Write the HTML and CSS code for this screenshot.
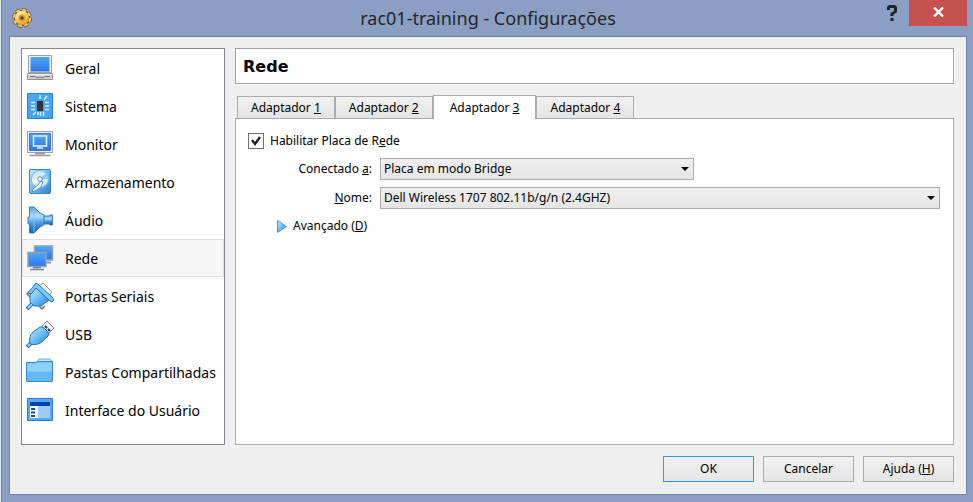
FILE: index.html
```html
<!DOCTYPE html>
<html lang="pt-BR">
    <head>
        <meta charset="UTF-8">
        <meta name="viewport" content="width=device-width, initial-scale=1.0">
        <title>rac01-training - Configurações</title>
        <link rel="stylesheet" href="styles.css">
    </head>
    <body>
        <header class="titlebar">
            <svg class="gear" viewBox="0 0 20 20">
                <defs>
                    <radialGradient id="gold" cx=".4" cy=".3" r=".75">
                        <stop offset="0" stop-color="#fff6c4"/>
                        <stop offset=".5" stop-color="#fbd468"/>
                        <stop offset="1" stop-color="#d08a25"/>
                    </radialGradient>
                </defs>
                <circle cx="10" cy="10" r="8.3" fill="#6b4a22"/>
                <circle cx="10" cy="10" r="8.4" fill="none" stroke="#6b4a22" stroke-width="3" stroke-dasharray="4.2 2.4"/>
                <circle cx="10" cy="10" r="8" fill="none" stroke="#f6c75c" stroke-width="2.4" stroke-dasharray="3.8 2.5"/>
                <circle cx="10" cy="10" r="7.2" fill="url(#gold)"/>
                <circle cx="10" cy="10" r="3.8" fill="#dda040"/>
                <circle cx="10" cy="10" r="1.8" fill="#5f3f15"/>
            </svg>
            <h1>rac01-training - Configurações</h1>
            <button class="help" aria-label="Ajuda">
                <svg width="10" height="16" viewBox="0 0 10 16"><path d="M0 5V2l2-2h6l2 2v5L6.5 9.5V11h-3V8L7 6V3H3v2zM3.5 13h3v3h-3z" fill="#222"/></svg>
            </button>
            <button class="close" aria-label="Fechar">
                <svg width="11" height="10" viewBox="0 0 11 10"><path d="M1 .5l9 9M10 .5l-9 9" stroke="#fff" stroke-width="2.4"/></svg>
            </button>
        </header>

        <main class="dialog">
            <div class="content">
                <nav class="sidebar">
                    <a href="#geral">
                        <svg viewBox="0 0 28 28">
                            <defs>
                                <linearGradient id="blue" x1="0" y1="0" x2="0" y2="1">
                                    <stop offset="0" stop-color="#4fa9fa"/>
                                    <stop offset="1" stop-color="#2f74e6"/>
                                </linearGradient>
                                <linearGradient id="sky" x1="0" y1="0" x2="1" y2="1">
                                    <stop offset="0" stop-color="#c8ecff"/>
                                    <stop offset=".5" stop-color="#6dbcf7"/>
                                    <stop offset="1" stop-color="#2b7bd0"/>
                                </linearGradient>
                                <linearGradient id="cone" x1="0" y1="0" x2="0" y2="1">
                                    <stop offset="0" stop-color="#4f9ce2"/>
                                    <stop offset=".35" stop-color="#b4defa"/>
                                    <stop offset=".6" stop-color="#4f9fe6"/>
                                    <stop offset="1" stop-color="#1b579f"/>
                                </linearGradient>
                            </defs>
                            <path d="M2.5 1.5h23v17h-23z" fill="#f2f2f2" stroke="#a0a0a0"/>
                            <path d="M4.5 3h19v14.5h-19z" fill="url(#blue)"/>
                            <path d="M1.5 19.5h25v6h-25z" fill="#cfcfcf" stroke="#909090"/>
                            <path d="M2 20.5h24" stroke="#f7f7f7"/>
                            <path d="M4 22.5h5l1 1h8l1-1h5" fill="none" stroke="#777"/>
                        </svg>
                        Geral
                    </a>
                    <a href="#sistema">
                        <svg viewBox="0 0 28 28">
                            <path d="M1.5 1.5h25v25h-25z" fill="#48a5f6" stroke="#2f83d6"/>
                            <path d="M11 9h6v10h-6z" fill="#333"/>
                            <path d="M14 3v4M18 8l3-4M5 10.5h4M5 14h4M5 17.5h4M19 10.5h4M19 14h4M19 17.5h4M10 20l-3 3M12 20v3M14.5 20v4M17.5 20v4" stroke="#d9f1ff" stroke-width="1.5"/>
                        </svg>
                        Sistema
                    </a>
                    <a href="#monitor">
                        <svg viewBox="0 0 28 28">
                            <path d="M1.5 1.5h25v21h-25z" fill="#f0f0f0" stroke="#a0a0a0"/>
                            <path d="M3.5 3.5h21v17h-21z" fill="url(#blue)" stroke="#3778d0"/>
                            <path d="M7.5 6h13v10h-13zM11 18h6" fill="none" stroke="#e4f5ff" stroke-width="1.5"/>
                            <path d="M9 23.5h10M3.5 25.5h21" stroke="#909090" stroke-width="1.5"/>
                        </svg>
                        Monitor
                    </a>
                    <a href="#armazenamento">
                        <svg viewBox="0 0 28 28">
                            <rect x="3.5" y="1.5" width="21" height="24" rx="1.5" fill="url(#sky)" stroke="#3a86cb"/>
                            <circle cx="14" cy="11" r="8.5" fill="#d2edfc" stroke="#79b5df"/>
                            <path d="M14 11l6-6a8 8 0 012 6z" fill="#8ec9ee"/>
                            <path d="M14 11l-6 6a8 8 0 01-2-6z" fill="#fff"/>
                            <circle cx="14" cy="11" r="2.3" fill="#fff" stroke="#5792bd"/>
                            <path d="M6 24l1-3 5-4 3-4 2 1-2 5-6 4z" fill="#f6fcff" stroke="#477fae" stroke-width=".8"/>
                        </svg>
                        Armazenamento
                    </a>
                    <a href="#audio">
                        <svg viewBox="0 0 28 28">
                            <path d="M16 10h7l1-1h2.5v10H24l-1-1h-7z" fill="url(#cone)" stroke="#3a7dc2"/>
                            <path d="M3.5 1H8l6 6 4 2v10l-4 2-6 6H3.500v-9H2v-7h1.5z" fill="url(#cone)" stroke="#3a7dc2"/>
                            <path d="M8 2v24" stroke="#8dc4ee"/>
                        </svg>
                        Áudio
                    </a>
                    <a href="#rede" class="selected" aria-current="page">
                        <svg viewBox="0 0 28 28">
                            <path d="M8.5 2h18v14h-18z" fill="url(#blue)" stroke="#8fa3b8" stroke-width="1.5"/>
                            <path d="M18 18.5h7" stroke="#8395a8" stroke-width="2"/>
                            <path d="M2 8.5h18v14H2z" fill="url(#blue)" stroke="#8fa3b8" stroke-width="1.5"/>
                            <path d="M7 23.5h8M4 25.5h14" stroke="#71869c" stroke-width="1.5"/>
                        </svg>
                        Rede
                    </a>
                    <a href="#portas-seriais">
                        <svg viewBox="0 0 28 28">
                            <path d="M13 4l4-3 9 9-3 4z" fill="#f4f4f4" stroke="#999"/>
                            <path d="M4 9l-3 3 3 3M13 24l3 3 3-3" fill="#ddd" stroke="#777" stroke-width="1.5"/>
                            <path d="M1 27l6-6" stroke="#2f7fc5" stroke-width="4"/>
                            <path d="M2 26l5-5" stroke="#8fd2fb" stroke-width="2"/>
                            <path d="M10 6l-6 7v7l4 4h7l8-6z" fill="url(#sky)" stroke="#2676bd"/>
                            <path d="M10 1l3 2 13 12 2 3-2 2-3-2L10 6 5 12l-3-1z" fill="#7cc8f8" stroke="#2c73b3"/>
                        </svg>
                        Portas Seriais
                    </a>
                    <a href="#usb">
                        <svg viewBox="0 0 28 28">
                            <path d="M15 7l6-6 7 7-6 6z" fill="#f0f0f0" stroke="#888"/>
                            <path d="M19 6l2 2M22 9l2 2" stroke="#333" stroke-width="2"/>
                            <path d="M5 23l-4 4" stroke="#2f81c9" stroke-width="4"/>
                            <path d="M5 23l-3 3" stroke="#8fd2fb" stroke-width="2"/>
                            <path d="M14 7q2-1 4 1l4 4q2 2 0 4l-5 5q-5 5-13 3-2-7 3-12z" fill="url(#sky)" stroke="#2873b9"/>
                        </svg>
                        USB
                    </a>
                    <a href="#pastas">
                        <svg viewBox="0 0 28 28">
                            <path d="M11 4l2-3h11l2 3v4H11z" fill="#c4ebff" stroke="#71a9ce"/>
                            <path d="M.5 4.5h9l2-1h15v20H.5z" fill="#63b9f5" stroke="#3989cb"/>
                            <path d="M1 5.5h9l2-1h14v9H1z" fill="#8bd2fd"/>
                        </svg>
                        Pastas Compartilhadas
                    </a>
                    <a href="#interface">
                        <svg viewBox="0 0 28 28">
                            <path d="M1.5 2.5h25v22h-25z" fill="#54aaf5" stroke="#3478cc"/>
                            <path d="M4 6h20v4H4z" fill="#0645a4"/>
                            <path d="M4 10h20v12H4z" fill="#f4faff"/>
                            <path d="M12 10h12v12H12z" fill="#9fcbff"/>
                            <path d="M5 12h4v2H5zM5 15.5h4v2H5zM5 19h4v2H5z" fill="#16499d"/>
                        </svg>
                        Interface do Usuário
                    </a>
                </nav>

                <section class="page">
                    <h2>Rede</h2>
                    <div class="tabs" role="tablist">
                        <button role="tab">Adaptador <u>1</u></button>
                        <button role="tab">Adaptador <u>2</u></button>
                        <button role="tab" class="active" aria-selected="true">Adaptador <u>3</u></button>
                        <button role="tab">Adaptador <u>4</u></button>
                    </div>
                    <form class="panel">
                        <div class="enable">
                            <input type="checkbox" id="enable" checked>
                            <label for="enable">Habilitar Placa de R<u>e</u>de</label>
                        </div>
                        <div class="fields">
                            <label for="attached">Conectado <u>a</u>:</label>
                            <select id="attached" class="short">
                                <option>Placa em modo Bridge</option>
                            </select>
                            <label for="name"><u>N</u>ome:</label>
                            <select id="name">
                                <option>Dell Wireless 1707 802.11b/g/n (2.4GHZ)</option>
                            </select>
                        </div>
                        <button type="button" class="advanced">
                            <svg width="10" height="13" viewBox="0 0 10 13"><path d="M.5 .5l9 6-9 6z" fill="url(#sky)" stroke="#4a98e0"/></svg>
                            <span>Avançado (<u>D</u>)</span>
                        </button>
                    </form>
                </section>
            </div>

            <footer class="buttons">
                <button class="default">OK</button>
                <button>Cancelar</button>
                <button>Ajuda (<u>H</u>)</button>
            </footer>
        </main>
    </body>
</html>
```

FILE: styles.css
```css
* {
    box-sizing: border-box;
}

body {
    display: flex;
    flex-direction: column;
    min-height: 100vh;
    margin: 0;
    padding: 0 6px 7px 8px;
    border-left: 1px solid #dfe4ee;
    background-color: #8b9ec3;
    box-shadow: inset 1px 0 #7185ab;
    font-family: 'Noto Sans', 'Open Sans', sans-serif;
    font-size: 12px;
    line-height: 16px;
    color: black;
}

button, select {
    font: inherit;
    color: inherit;
    border-radius: 0;
}

button {
    padding: 0;
}

.titlebar {
    display: flex;
    align-items: flex-start;
    height: 36px;
}

.gear {
    width: 20px;
    height: 20px;
    margin: 8px 0 0 3px;
}

h1 {
    flex: 1;
    margin: 6px 0 0 69px;
    font-size: 18px;
    font-weight: normal;
    line-height: 24px;
    text-align: center;
    color: #262626;
}

.help {
    width: 34px;
    height: 26px;
    border: none;
    background: none;
}

.help svg {
    margin-top: 4px;
}

.close {
    width: 58px;
    height: 26px;
    border: none;
    background-color: #c75050;
}

.dialog {
    display: flex;
    flex: 1;
    flex-direction: column;
    padding: 11px 12px 12px 11px;
    border: 1px solid #7185ab;
    background-color: #efefef;
}

.content {
    display: flex;
    flex: 1;
    gap: 10px;
}

.sidebar {
    width: 204px;
    padding-bottom: 15px;
    border: 1px solid #828790;
    background-color: white;
}

.sidebar a {
    display: flex;
    align-items: center;
    gap: 11px;
    height: 38px;
    padding-left: 3px;
    border: 1px solid transparent;
    font-size: 14px;
    line-height: 21px;
    white-space: nowrap;
    color: black;
    text-decoration: none;
}

.sidebar svg {
    flex: none;
    width: 28px;
    height: 28px;
}

.sidebar .selected {
    border-color: #dedede;
    background-color: #f7f7f7;
}

.page {
    display: flex;
    flex: 1;
    flex-direction: column;
}

h2 {
    margin: 0;
    padding: 7px 7px 5px;
    border: 1px solid #a0a0a0;
    background-color: white;
    box-shadow: 1px 1px white;
    font-family: 'DejaVu Sans', sans-serif;
    font-size: 16px;
    line-height: 22px;
}

.tabs {
    display: flex;
    align-items: flex-end;
    margin-top: 11px;
    padding-left: 2px;
}

.tabs button {
    height: 22px;
    padding: 0 13px;
    border: 1px solid #acacac;
    border-bottom: none;
    background: linear-gradient(#f0f0f0, #e5e5e5);
}

.tabs .active {
    height: 24px;
    margin-bottom: -1px;
    padding: 0 16px;
    background: white;
    z-index: 1;
}

.panel {
    flex: 1;
    padding: 14px 13px 14px 12px;
    border: 1px solid #acacac;
    background-color: white;
}

.enable {
    display: flex;
    align-items: center;
    gap: 6px;
}

.enable input {
    appearance: none;
    width: 16px;
    height: 16px;
    margin: 0;
    border: 1px solid #707070;
    background: white;
}

.enable input:checked {
    background: white url("data:image/svg+xml,%3Csvg xmlns='http://www.w3.org/2000/svg' viewBox='0 0 14 14'%3E%3Cpath d='M3 6l3 4 5-7' fill='none' stroke='%23222' stroke-width='2.4'/%3E%3C/svg%3E");
}

.fields {
    display: grid;
    grid-template-columns: 124px 1fr;
    gap: 7px 8px;
    align-items: center;
    margin-top: 9px;
}

.fields label {
    text-align: right;
}

select {
    appearance: none;
    width: 100%;
    height: 22px;
    padding: 0 3px;
    border: 1px solid #acacac;
    background: url("data:image/svg+xml,%3Csvg xmlns='http://www.w3.org/2000/svg' width='8' height='4'%3E%3Cpath d='M0 0h8L4 4z'/%3E%3C/svg%3E") no-repeat right 4px center, linear-gradient(#f0f0f0, #e5e5e5);
}

.short {
    width: 56%;
}

.advanced {
    display: flex;
    align-items: center;
    gap: 6px;
    margin: 9px 0 0 29px;
    border: none;
    background: none;
}

.buttons {
    display: flex;
    justify-content: flex-end;
    gap: 9px;
    margin-top: 11px;
}

.buttons button {
    width: 91px;
    height: 26px;
    border: 1px solid #acacac;
    background: linear-gradient(#f0f0f0, #e5e5e5);
}

.buttons .default {
    border-color: #3399ff;
}
```
